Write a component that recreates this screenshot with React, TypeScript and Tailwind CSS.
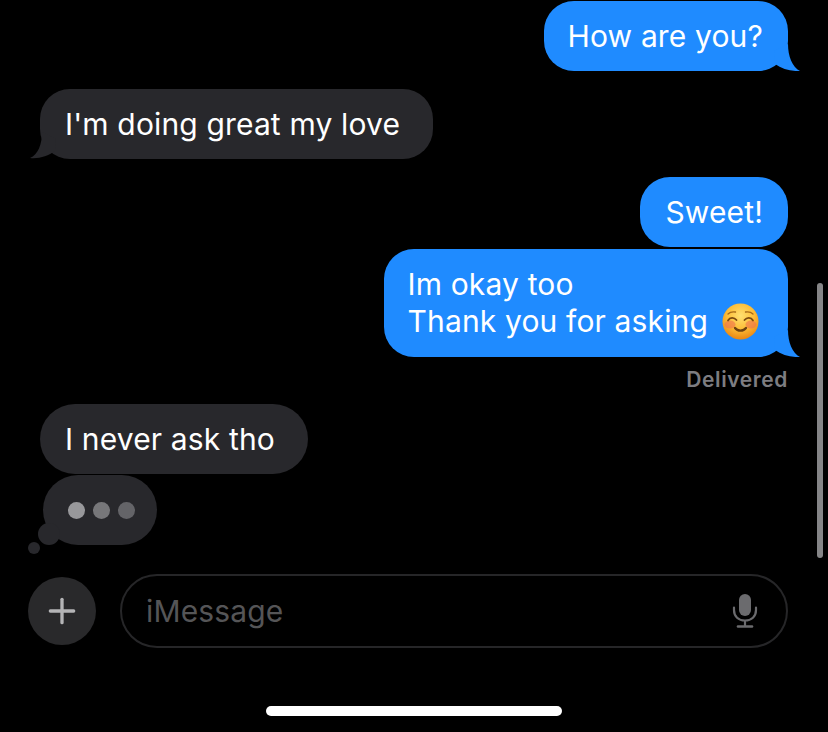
import { Plus } from "lucide-react";

const blue = "bg-[#1f8bff]";
const gray = "bg-[#28282c]";

function Tail({ side }: { side: "left" | "right" }) {
  if (side === "right") {
    return (
      <svg
        className="absolute bottom-0 right-[-12px] text-[#1f8bff]"
        width="30"
        height="30"
        viewBox="0 0 30 30"
      >
        <path d="M18 3C18 15 22 26 30 30C21 30.5 12 28 5 23L4 10Z" fill="currentColor" />
      </svg>
    );
  }
  return (
    <svg
      className="absolute bottom-0 left-[-10px] -scale-x-100 text-[#28282c]"
      width="30"
      height="30"
      viewBox="0 0 30 30"
    >
      <path d="M18 3C18 15 22 26 30 29C21 30 12 27 5 22L4 10Z" fill="currentColor" />
    </svg>
  );
}

function Smile() {
  return (
    <svg className="ml-[14px] shrink-0" width="37" height="37" viewBox="0 0 37 37">
      <defs>
        <radialGradient id="face" cx="50%" cy="34%" r="68%">
          <stop offset="0%" stopColor="#ffe071" />
          <stop offset="55%" stopColor="#fdbd37" />
          <stop offset="100%" stopColor="#e9820f" />
        </radialGradient>
      </defs>
      <circle cx="18.5" cy="18.5" r="18" fill="url(#face)" />
      <ellipse cx="8" cy="21.500" rx="5.500" ry="4" fill="#f0714f" opacity="0.6" />
      <ellipse cx="29" cy="21.500" rx="5.500" ry="4" fill="#f0714f" opacity="0.6" />
      <path d="M6 17.500C8 14 12 14 14.500 17" fill="none" stroke="#7d4a10" strokeWidth="1.800" strokeLinecap="round" />
      <path d="M22.500 17C25 14 29 14 31 17.500" fill="none" stroke="#7d4a10" strokeWidth="1.800" strokeLinecap="round" />
      <path d="M6 11C8 9 11 8.500 13.500 9" fill="none" stroke="#a86a18" strokeWidth="1.300" strokeLinecap="round" />
      <path d="M23.500 9C26 8.500 29 9 31 11" fill="none" stroke="#a86a18" strokeWidth="1.300" strokeLinecap="round" />
      <path d="M13 25C15.500 28.500 21.500 28.500 24 25" fill="none" stroke="#6e4210" strokeWidth="2.200" strokeLinecap="round" />
    </svg>
  );
}

function Mic() {
  return (
    <svg width="26" height="36" viewBox="0 0 26 36" fill="none" stroke="#6b6b6e">
      <rect x="7" y="1" width="12" height="22" rx="6" fill="#6b6b6e" stroke="none" />
      <path d="M2 14.500V17C2 23.500 6.500 27.500 13 27.500C19.500 27.500 24 23.500 24 17V14.500" strokeWidth="2.200" strokeLinecap="round" />
      <path d="M13 27.500V33" strokeWidth="2.200" />
      <path d="M6 33.500H20" strokeWidth="2.600" strokeLinecap="round" />
    </svg>
  );
}

export default function App() {
  return (
    <div className="relative h-[732px] w-[828px] overflow-hidden bg-black font-['Inter',sans-serif] text-[30px] leading-[37px] tracking-[0.15px] text-white">
      {/* Thread */}
      <div className="flex flex-col px-[40px] pt-px">
        <div className={`relative flex h-[70px] items-center self-end rounded-[30px] pl-[24px] pr-[25px] ${blue}`}>
          How are you?
          <Tail side="right" />
        </div>

        <div className={`relative mt-[18px] flex h-[70px] items-center self-start rounded-[30px] pl-[25px] pr-[33px] ${gray}`}>
          I'm doing great my love
          <Tail side="left" />
        </div>

        <div className={`mt-[18px] flex h-[70px] items-center self-end rounded-[30px] px-[25px] ${blue}`}>
          Sweet!
        </div>

        <div className={`relative mt-[2px] flex h-[108px] flex-col justify-center self-end rounded-[30px] pl-[24px] pr-[29px] ${blue}`}>
          <div>Im okay too</div>
          <div className="flex items-center whitespace-nowrap">
            Thank you for asking
            <Smile />
          </div>
          <Tail side="right" />
        </div>

        <div className="mt-[13px] self-end text-[21px] leading-[20px] font-semibold tracking-[0.6px] text-[#7d7d81]">
          Delivered
        </div>

        <div className={`mt-[14px] flex h-[70px] items-center self-start rounded-[35px] pl-[25px] pr-[33px] ${gray}`}>
          I never ask tho
        </div>

        {/* Typing indicator */}
        <div className={`relative ml-[3px] mt-px flex h-[70px] w-[114px] items-center justify-center gap-2 self-start rounded-[35px] pl-[2px] ${gray}`}>
          <span className="size-[17px] rounded-full bg-[#98989b]" />
          <span className="size-[17px] rounded-full bg-[#77777a]" />
          <span className="size-[17px] rounded-full bg-[#646468]" />
          <span className={`absolute left-[-5px] top-[48px] size-[22px] rounded-full ${gray}`} />
          <span className={`absolute left-[-15px] top-[67px] size-[12px] rounded-full ${gray}`} />
        </div>
      </div>

      {/* Composer */}
      <div className="mt-[29px] flex items-center gap-[24px] pl-[28px] pr-[40px]">
        <div className="flex size-[68px] shrink-0 items-center justify-center rounded-full bg-[#29292b]">
          <Plus size={40} strokeWidth={2} className="text-[#b4b4b6]" />
        </div>
        <div className="flex h-[74px] flex-1 items-center justify-between rounded-[37px] border-2 border-[#262628] pl-[24px] pr-[28px] text-[#555557]">
          <span>iMessage</span>
          <Mic />
        </div>
      </div>

      {/* Scrollbar */}
      <div className="absolute left-[817px] top-[283px] h-[275px] w-[6px] rounded-full bg-[#858587]" />

      {/* Home indicator */}
      <div className="absolute bottom-[16px] left-[266px] h-[10px] w-[296px] rounded-full bg-white" />
    </div>
  );
}
